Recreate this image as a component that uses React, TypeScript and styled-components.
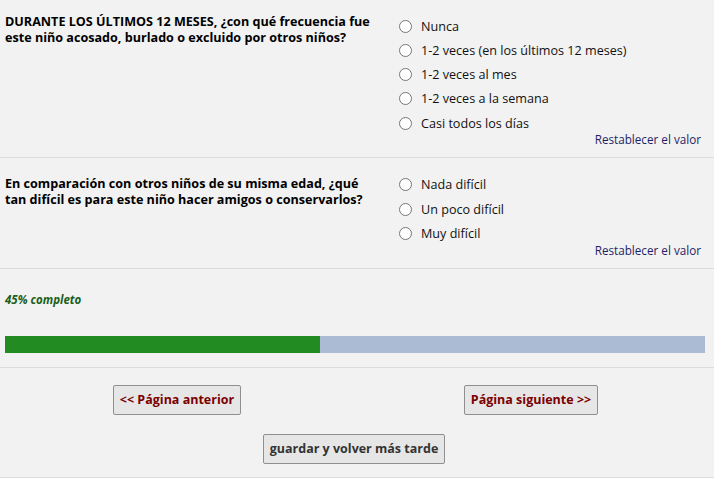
import styled, { createGlobalStyle } from "styled-components";

const GlobalStyle = createGlobalStyle`
	html, body {
		margin: 0;
		padding: 0;
		background: #f2f2f2;
		font-family: "Open Sans", "Liberation Sans", sans-serif;
	}
`;

const COLORS = {
	LINE: "#dcdcdc",
	TEXT: "#111",
	LINK: "#1f1f66",
	DONE: "#228b22",
	TODO: "#abbbd3",
	NAV: "#7a0000",
};

const Page = styled.div`
	width: 714px;
	color: ${COLORS.TEXT};
`;

const QuestionRow = styled.div<{ $top: number; $optTop: number }>`
	display: grid;
	grid-template-columns: 392px 1fr;
	border-bottom: 1px solid ${COLORS.LINE};
	padding-bottom: 11px;

	& > :first-child {
		padding-top: ${(p) => p.$top}px;
	}
	& > :last-child {
		padding-top: ${(p) => p.$optTop}px;
	}
`;

const QuestionText = styled.div`
	padding: 0 11px 0 5px;
	font-size: 12.6px;
	font-weight: 700;
	line-height: 16px;
	color: #000;
`;

const Options = styled.div`
	display: flex;
	flex-direction: column;
	padding-right: 13px;
`;

const Option = styled.label<{ $step: number }>`
	display: flex;
	align-items: center;
	gap: 9px;
	height: ${(p) => p.$step}px;
	padding-left: 7px;
	font-size: 12.6px;
	color: ${COLORS.TEXT};
`;

const Radio = styled.span`
	width: 11px;
	height: 11px;
	border: 1px solid #767676;
	border-radius: 50%;
	background: #fff;
	flex-shrink: 0;
`;

const Reset = styled.a`
	align-self: flex-end;
	margin-top: -3px;
	font-size: 11.7px;
	line-height: 14px;
	color: ${COLORS.LINK};
	cursor: pointer;
`;

const ProgressBlock = styled.div`
	display: flex;
	flex-direction: column;
	gap: 29px;
	padding: 23px 9px 14px 5px;
	border-bottom: 1px solid ${COLORS.LINE};
`;

const ProgressLabel = styled.div`
	font-size: 11.5px;
	line-height: 15px;
	font-weight: 700;
	font-style: italic;
	color: #1a5f1a;
`;

const Track = styled.div`
	height: 17px;
	background: ${COLORS.TODO};
`;

const Fill = styled.div`
	height: 100%;
	background: ${COLORS.DONE};
`;

const ButtonArea = styled.div`
	display: grid;
	grid-template-columns: 1fr 1fr;
	row-gap: 19px;
	padding: 17px 6px 13px 0;
	border-bottom: 1px solid ${COLORS.LINE};
	justify-items: center;
`;

const Button = styled.button<{ $nav?: boolean }>`
	font-family: "Open Sans", "Liberation Sans", sans-serif;
	font-size: 12.5px;
	font-weight: 700;
	line-height: 18px;
	padding: 5px 6px;
	background: #e6e6e6;
	border: 1px solid #8f8f8f;
	border-radius: 2px;
	color: ${(p) => (p.$nav ? COLORS.NAV : "#333")};
	cursor: pointer;
`;

const SaveButton = styled(Button)`
	grid-column: 1 / span 2;
`;

const questions = [
	{
		text: "DURANTE LOS ÚLTIMOS 12 MESES, ¿con qué frecuencia fue este niño acosado, burlado o excluido por otros niños?",
		options: [
			"Nunca",
			"1-2 veces (en los últimos 12 meses)",
			"1-2 veces al mes",
			"1-2 veces a la semana",
			"Casi todos los días",
		],
		top: 14,
		optTop: 14,
		step: 24.25,
	},
	{
		text: "En comparación con otros niños de su misma edad, ¿qué tan difícil es para este niño hacer amigos o conservarlos?",
		options: ["Nada difícil", "Un poco difícil", "Muy difícil"],
		top: 18,
		optTop: 14,
		step: 24.5,
	},
];

export default function App() {
	const percent = 45;
	return (
		<Page>
			<GlobalStyle />
			{questions.map((q) => (
				<QuestionRow key={q.text} $top={q.top} $optTop={q.optTop}>
					<QuestionText>{q.text}</QuestionText>
					<Options>
						{q.options.map((o) => (
							<Option key={o} $step={q.step}>
								<Radio />
								{o}
							</Option>
						))}
						<Reset>Restablecer el valor</Reset>
					</Options>
				</QuestionRow>
			))}
			<ProgressBlock>
				<ProgressLabel>{percent}% completo</ProgressLabel>
				<Track>
					<Fill style={{ width: `${percent}%` }} />
				</Track>
			</ProgressBlock>
			<ButtonArea>
				<Button $nav>&lt;&lt; Página anterior</Button>
				<Button $nav>Página siguiente &gt;&gt;</Button>
				<SaveButton>guardar y volver más tarde</SaveButton>
			</ButtonArea>
		</Page>
	);
}
